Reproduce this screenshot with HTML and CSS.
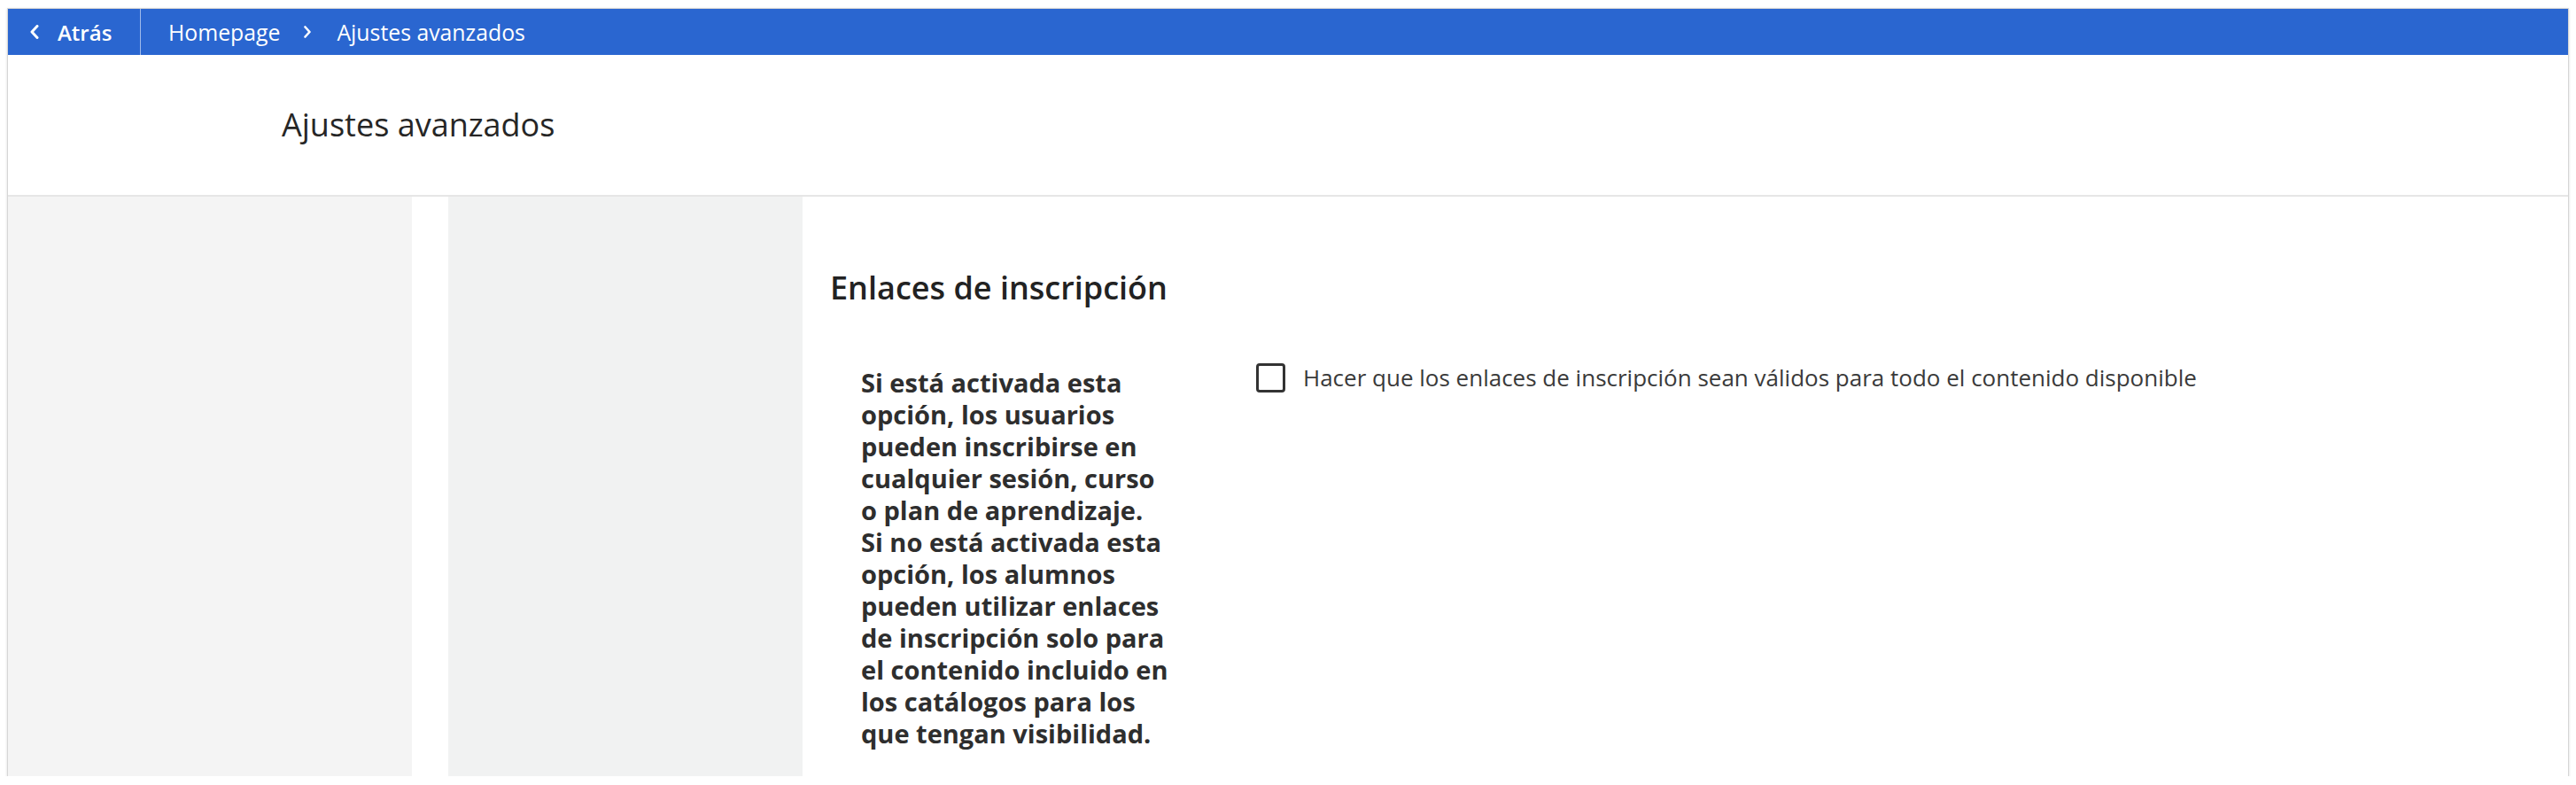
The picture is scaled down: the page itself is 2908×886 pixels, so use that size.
FILE: index.html
```html
<!DOCTYPE html>
<html lang="es">
<head>
<meta charset="utf-8">
<title>Ajustes avanzados</title>
<link rel="stylesheet" href="styles.css">
</head>
<body>
<div class="frame">
  <nav class="topbar">
    <a class="back" href="#">
      <svg class="back-icon" width="10" height="16" viewBox="0 0 10 16"><path d="M8 1.5 L2 8 L8 14.5" fill="none" stroke="#fff" stroke-width="3" stroke-linecap="round" stroke-linejoin="round"/></svg>
      <span class="back-text">Atrás</span>
    </a>
    <div class="crumbs">
      <span class="crumb">Homepage</span>
      <svg class="crumb-sep" width="10" height="14" viewBox="0 0 10 14"><path d="M2.5 1.5 L7.5 7 L2.5 12.5" fill="none" stroke="#fff" stroke-width="2.6" stroke-linecap="round" stroke-linejoin="round"/></svg>
      <span class="crumb">Ajustes avanzados</span>
    </div>
  </nav>
  <header class="page-header">
    <h1 class="page-title">Ajustes avanzados</h1>
  </header>
  <div class="layout">
    <aside class="side-a"></aside>
    <aside class="side-b"></aside>
    <main class="content">
      <h2 class="section-title">Enlaces de inscripción</h2>
      <div class="setting">
        <p class="setting-desc">Si está activada esta opción, los usuarios pueden inscribirse en cualquier sesión, curso o plan de aprendizaje. Si no está activada esta opción, los alumnos pueden utilizar enlaces de inscripción solo para el contenido incluido en los catálogos para los que tengan visibilidad.</p>
        <label class="check">
          <span class="check-box"></span>
          <span class="check-label">Hacer que los enlaces de inscripción sean válidos para todo el contenido disponible</span>
        </label>
      </div>
    </main>
  </div>
</div>
</body>
</html>
```
FILE: styles.css
```css
* { box-sizing: border-box; }
html, body { margin: 0; padding: 0; background: #ffffff; }
body {
  font-family: "Open Sans", "Noto Sans", "Liberation Sans", sans-serif;
  padding: 10px 9px 0 9px;
}
.frame {
  height: 866px;
  background: #fff;
  box-shadow: 0 0 0 1px #d6d6d6, 0 1px 3px 1px rgba(0,0,0,0.14);
  display: flex;
  flex-direction: column;
  overflow: hidden;
}
.topbar {
  height: 52px;
  flex: none;
  background: #2a66d0;
  display: flex;
  align-items: stretch;
  color: #fff;
}
.back {
  width: 150px;
  display: flex;
  align-items: center;
  padding-left: 25px;
  border-right: 1px solid rgba(255,255,255,0.55);
  color: #fff;
  text-decoration: none;
}
.back-icon { display: block; margin-right: 21px; }
.back-text { font-size: 24px; font-weight: 600; }
.crumbs {
  display: flex;
  align-items: center;
  padding-left: 31px;
}
.crumb { font-size: 24.8px; font-weight: 400; color: #fff; }
.crumb-sep { display: block; margin: 0 28px 0 26px; }
.page-header {
  height: 160px;
  flex: none;
  border-bottom: 2px solid #e6e6e6;
  display: flex;
  align-items: center;
  padding-left: 309px;
}
.page-title {
  margin: 0;
  font-size: 36px;
  font-weight: 400;
  color: #262626;
  line-height: 1.2;
}
.layout {
  flex: 1;
  display: flex;
}
.side-a { width: 456px; flex: none; background: #f4f4f4; }
.side-b { width: 400px; flex: none; margin-left: 41px; background: #f1f2f2; }
.content {
  flex: 1;
  padding: 81px 0 0 31px;
}
.section-title {
  margin: 0;
  font-size: 36px;
  font-weight: 600;
  color: #222;
  line-height: 43px;
}
.setting {
  display: flex;
  align-items: flex-start;
  margin-top: 64px;
  padding-left: 35px;
}
.setting-desc {
  margin: 4px 0 0 0;
  width: 350px;
  flex: none;
  font-size: 29px;
  font-weight: 700;
  line-height: 36px;
  color: #2e2e2e;
}
.check {
  display: flex;
  align-items: center;
  margin-left: 96px;
}
.check-box {
  width: 33px;
  height: 33px;
  border: 3.5px solid #333;
  border-radius: 4px;
  flex: none;
}
.check-label {
  margin-left: 20px;
  font-size: 26px;
  font-weight: 400;
  color: #3a3a3a;
  line-height: 33px;
}
```
